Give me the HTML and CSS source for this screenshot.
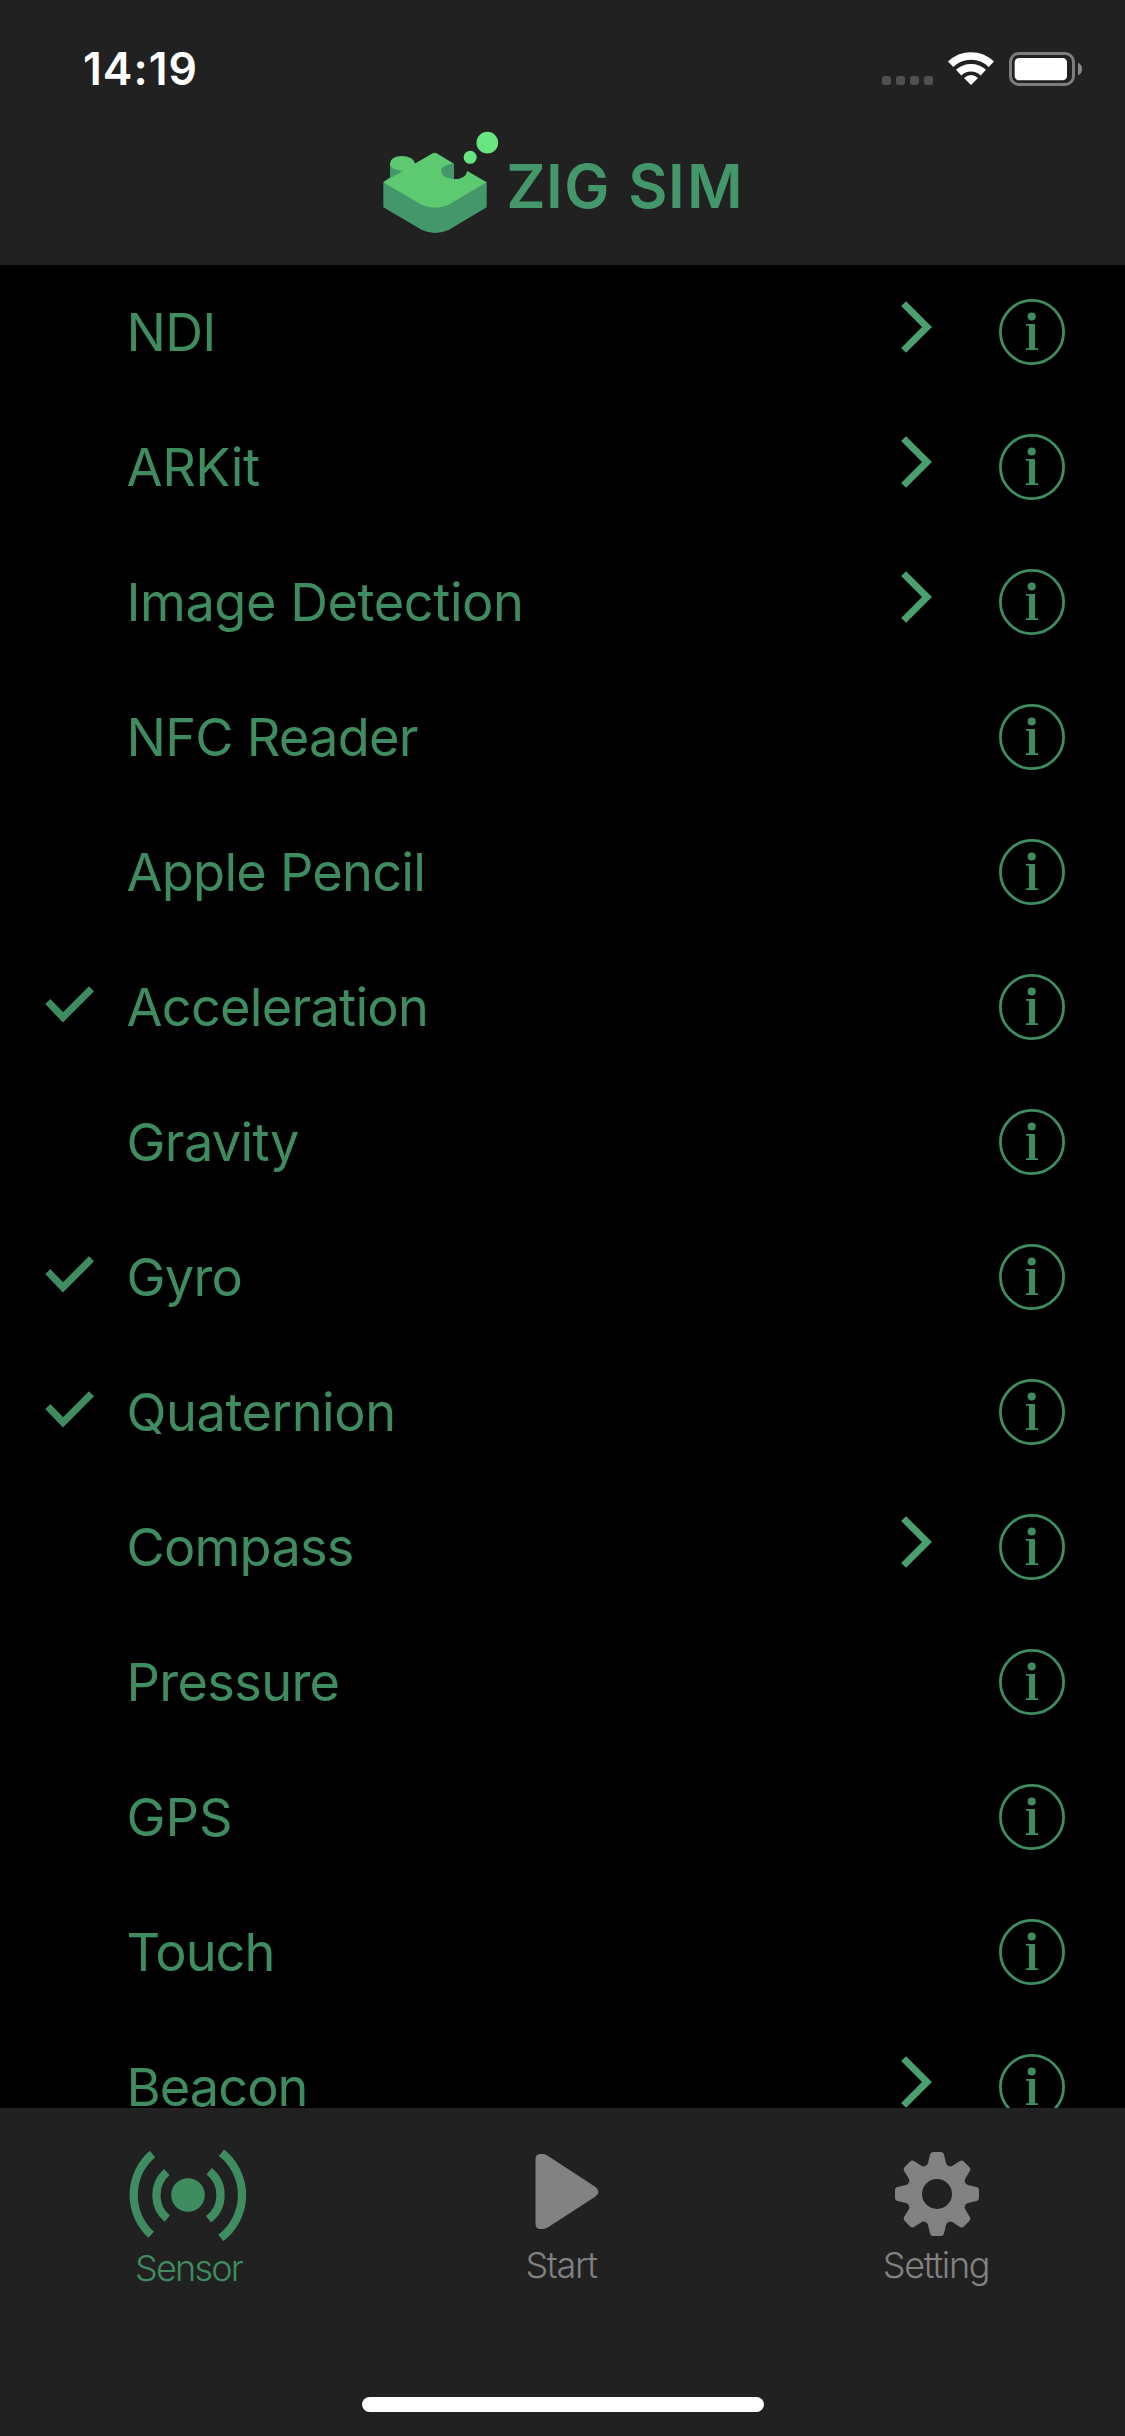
FILE: index.html
```
<!DOCTYPE html>
<html lang="en">
<head>
<meta charset="utf-8">
<title>ZIG SIM</title>
<link rel="stylesheet" href="styles.css">
</head>
<body>
<svg class="defs" aria-hidden="true">
  <symbol id="info" viewBox="0 0 66 66">
    <circle cx="33" cy="33" r="31.6" fill="none" stroke="currentColor" stroke-width="2.8"/>
    <circle cx="32.7" cy="17.5" r="4.1" fill="currentColor"/>
    <path d="M27 25H36V49.3H39V51H27V49.3H30V26.8H27Z" fill="currentColor"/>
  </symbol>
  <symbol id="chevron" viewBox="0 0 31 52">
    <path d="M2.6 2.6L26 26L2.6 49.4" fill="none" stroke="currentColor" stroke-width="7"/>
  </symbol>
  <symbol id="check" viewBox="0 0 50 37">
    <path d="M2.8 15.6L18 31.3L46.5 2.8" fill="none" stroke="currentColor" stroke-width="7.2"/>
  </symbol>
  <path id="tooth" d="M0 0L-11.7 -28.2Q-9.6 -28.4 -9 -31L-7 -39.5Q-6.3 -42 -4 -42H4Q6.3 -42 7 -39.5L9 -31Q9.6 -28.4 11.7 -28.2Z"/>
</svg>
<div class="screen">
  <header class="header">
    <div class="status">
      <span class="time">14:19</span>
      <svg class="status-icons" viewBox="0 0 795 240">
        <g fill="#505050"><rect x="66" y="138" width="27" height="27" rx="8"/><rect x="108" y="138" width="27" height="27" rx="8"/><rect x="150" y="138" width="27" height="27" rx="8"/><rect x="192" y="138" width="27" height="27" rx="8"/></g>
        <g fill="none" stroke="#fff" stroke-width="23">
          <path d="M272 103A87 87 0 0 1 394 103"/>
          <path d="M296 128A54 54 0 0 1 370 128"/>
        </g>
        <path d="M333 165L312 144Q333 126 354 144Z" fill="#fff"/>
        <rect x="451.500" y="70.500" width="189" height="93" rx="25" fill="none" stroke="#7d7d7d" stroke-width="9"/>
        <rect x="464" y="84" width="157" height="67" rx="13" fill="#fff"/>
        <path d="M654 98Q666 103 666 117Q666 131 654 136Z" fill="#8a8a8a"/>
      </svg>
    </div>
    <div class="brand">
      <svg class="logo" viewBox="0 0 1170 450">
        <path fill="#44976b" d="M40 186L60 172V130H132L252 132V178L350 186V262L236 330Q195 348 156 330L40 262Z"/>
        <path fill="#212121" d="M252 130H350V186L292 153Q286 178 252 178Z"/>
        <path fill="#5dca71" d="M40 187L98 153Q60 150 60 130Q62 109 97 108Q132 110 134 131L188 100Q194 96 200 100L252 131Q213 134 213 154Q215 174 252 178Q286 178 292 153L350 187L234 255Q195 272 156 255Z"/>
        <circle cx="300.500" cy="112" r="19.500" fill="#68e581"/>
        <circle cx="352" cy="68" r="32.500" fill="#68e581"/>
        <text class="wordmark" y="264" x="409 528 583 720 775 894 951">ZIG SIM</text>
      </svg>
    </div>
  </header>
  <main class="list">
    <div class="row"><span class="mark"></span><span class="label ndi">NDI</span><svg class="chevron"><use href="#chevron"/></svg><svg class="info"><use href="#info"/></svg></div>
    <div class="row"><span class="mark"></span><span class="label arkit">ARKit</span><svg class="chevron"><use href="#chevron"/></svg><svg class="info"><use href="#info"/></svg></div>
    <div class="row"><span class="mark"></span><span class="label image">Image Detection</span><svg class="chevron"><use href="#chevron"/></svg><svg class="info"><use href="#info"/></svg></div>
    <div class="row"><span class="mark"></span><span class="label nfc">NFC Reader</span><svg class="info"><use href="#info"/></svg></div>
    <div class="row"><span class="mark"></span><span class="label pencil">Apple Pencil</span><svg class="info"><use href="#info"/></svg></div>
    <div class="row"><span class="mark"><svg class="check"><use href="#check"/></svg></span><span class="label accel">Acceleration</span><svg class="info"><use href="#info"/></svg></div>
    <div class="row"><span class="mark"></span><span class="label gravity">Gravity</span><svg class="info"><use href="#info"/></svg></div>
    <div class="row"><span class="mark"><svg class="check"><use href="#check"/></svg></span><span class="label gyro">Gyro</span><svg class="info"><use href="#info"/></svg></div>
    <div class="row"><span class="mark"><svg class="check"><use href="#check"/></svg></span><span class="label quaternion">Quaternion</span><svg class="info"><use href="#info"/></svg></div>
    <div class="row"><span class="mark"></span><span class="label compass">Compass</span><svg class="chevron"><use href="#chevron"/></svg><svg class="info"><use href="#info"/></svg></div>
    <div class="row"><span class="mark"></span><span class="label pressure">Pressure</span><svg class="info"><use href="#info"/></svg></div>
    <div class="row"><span class="mark"></span><span class="label gps">GPS</span><svg class="info"><use href="#info"/></svg></div>
    <div class="row"><span class="mark"></span><span class="label touch">Touch</span><svg class="info"><use href="#info"/></svg></div>
    <div class="row"><span class="mark"></span><span class="label beacon">Beacon</span><svg class="chevron"><use href="#chevron"/></svg><svg class="info"><use href="#info"/></svg></div>
  </main>
  <nav class="tabs">
    <div class="tab active">
      <svg class="tab-icon" viewBox="122.500 2140 130 110">
        <g fill="none" stroke="currentColor" stroke-width="8.300">
          <path d="M152 2154A54 54 0 0 0 150.700 2234.700"/>
          <path d="M166.300 2172A31 31 0 0 0 166.700 2218.700"/>
          <path d="M208.700 2171.300A30.500 30.500 0 0 1 208 2219.300"/>
          <path d="M221 2152.700A54 54 0 0 1 220.300 2238"/>
        </g>
        <circle cx="187.500" cy="2195" r="16.800" fill="currentColor"/>
      </svg>
      <span class="tab-label sensor">Sensor</span>
    </div>
    <div class="tab">
      <svg class="tab-icon" viewBox="497.500 2140 130 110">
        <path fill="currentColor" d="M535 2159Q535 2154 540 2154H542.500Q545 2154 548 2156.300L595 2187Q598 2189.500 598 2191.700Q598 2194.500 595 2196.500L548 2227Q545 2229 542.500 2229H540Q535 2229 535 2224Z"/>
      </svg>
      <span class="tab-label start">Start</span>
    </div>
    <div class="tab">
      <svg class="tab-icon" viewBox="873 2140 130 110">
        <g transform="translate(937 2194)" fill="currentColor">
          <use href="#tooth"/><use href="#tooth" transform="rotate(45)"/><use href="#tooth" transform="rotate(90)"/><use href="#tooth" transform="rotate(135)"/><use href="#tooth" transform="rotate(180)"/><use href="#tooth" transform="rotate(225)"/><use href="#tooth" transform="rotate(270)"/><use href="#tooth" transform="rotate(315)"/>
          <circle r="21" fill="none" stroke="currentColor" stroke-width="12"/>
          <circle r="15" fill="#212121"/>
        </g>
      </svg>
      <span class="tab-label setting">Setting</span>
    </div>
  </nav>
  <footer class="home"><div class="home-bar"></div></footer>
</div>
</body>
</html>
```
FILE: styles.css
```
* { box-sizing: border-box; }
body { margin: 0; background: #000; font-family: Inter, "Liberation Sans", sans-serif; }
svg { display: block; }
.defs { display: none; }
.screen { width: 1125px; height: 2436px; display: flex; flex-direction: column; overflow: hidden; background: #212121; }
.header { height: 265px; flex: none; display: flex; flex-direction: column; }
.status { height: 120px; padding: 30px 0 0 83px; display: flex; justify-content: space-between; align-items: flex-start; }
.time { font-size: 44.5px; line-height: 78px; font-weight: 600; letter-spacing: 1px; color: #fff; }
.status-icons { width: 265px; height: 80px; }
.brand { height: 145px; padding-left: 370px; }
.logo { width: 390px; height: 150px; overflow: visible; }
.wordmark { font-size: 181px; font-weight: 600; fill: #44976b; }
.list { flex: none; height: 1843px; overflow: hidden; background: #000; color: #3f8c60; }
.row { height: 135px; padding: 0 60px 1px 45px; display: flex; align-items: center; }
.mark { width: 81.5px; flex: none; }
.check { width: 50px; height: 37px; margin-top: -6px; }
.label { flex: 1; font-size: 52.3px; line-height: 42px; letter-spacing: -0.75px; white-space: nowrap; }
.ndi, .gravity, .pressure { letter-spacing: -0.65px; }
.arkit, .image, .quaternion { letter-spacing: -0.45px; }
.gps { letter-spacing: 0; }
.touch, .beacon { letter-spacing: -0.95px; }
.chevron { width: 31px; height: 52px; margin: -10px 67px 0 0; color: #4aa06f; }
.info { width: 66px; height: 66px; flex: none; }
.tabs { flex: none; height: 240px; padding-top: 32px; display: grid; grid-template-columns: repeat(3, 1fr); color: #828282; }
.tab { display: flex; flex-direction: column; align-items: center; }
.active { color: #3f8c60; }
.tab-icon { width: 130px; height: 110px; }
.tab-label { font-size: 36px; line-height: 44px; font-weight: 300; letter-spacing: -1.3px; margin-top: -7px; }
.sensor { margin-top: -4px; padding-left: 2px; letter-spacing: -1.8px; }
.start, .setting { padding-right: 3px; }
.home { flex: 1; padding-top: 49px; display: flex; justify-content: center; align-items: flex-start; }
.home-bar { width: 402px; height: 15px; border-radius: 8px; background: #fff; }
```
